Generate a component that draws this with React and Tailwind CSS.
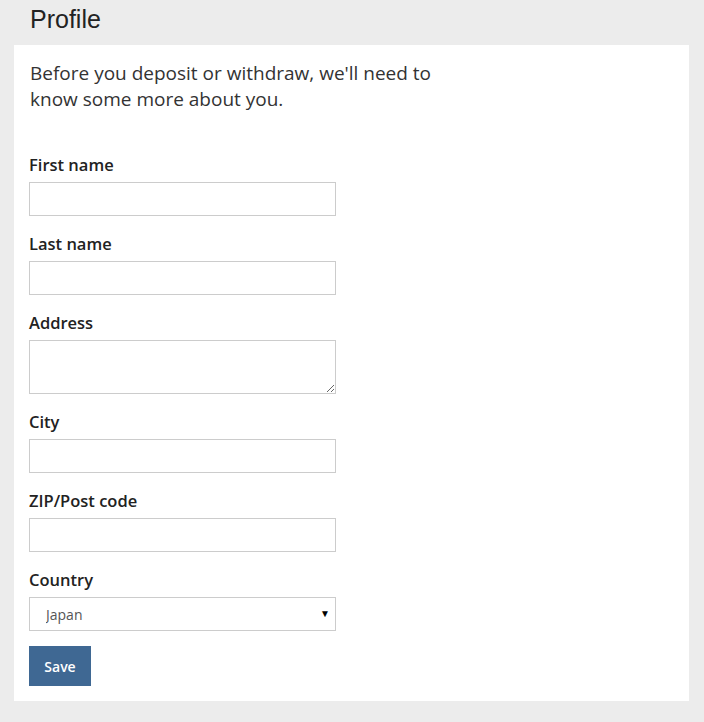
import React from 'react';

const fields = [
  { id: 'first', label: 'First name' },
  { id: 'last', label: 'Last name' },
  { id: 'address', label: 'Address', multiline: true },
  { id: 'city', label: 'City' },
  { id: 'zip', label: 'ZIP/Post code' },
];

const inputClass =
  'block w-[307px] border border-[#cccccc] bg-white outline-none';

const Field = ({ id, label, multiline }) => (
  <div className="mt-[17px] first:mt-0">
    <label htmlFor={id} className="block text-[16.5px] leading-[22px] font-semibold text-[#222] mb-[6px]">
      {label}
    </label>
    {multiline ? (
      <textarea id={id} className={`${inputClass} h-[54px] resize`} />
    ) : (
      <input id={id} type="text" className={`${inputClass} h-[34px]`} />
    )}
  </div>
);

export default function App() {
  return (
    <div className="min-h-screen bg-[#ececec] pb-[21px]" style={{ fontFamily: '"Open Sans", sans-serif' }}>
      <h1
        className="h-[45px] pl-[30px] pt-[5px] text-[25px] leading-[28px] text-[#222]"
        style={{ fontFamily: '"Liberation Sans", Arial, sans-serif' }}
      >
        Profile
      </h1>
      <div className="ml-[14px] mr-[15px] bg-white p-[15px]">
        <p className="pl-[1px] text-[19px] leading-[26px] text-[#333] w-[445px]">
          Before you deposit or withdraw, we'll need to know some more about you.
        </p>
        <form className="mt-[42px]" onSubmit={(e) => e.preventDefault()}>
          {fields.map((f) => (
            <Field key={f.id} {...f} />
          ))}
          <div className="mt-[17px]">
            <label htmlFor="country" className="block text-[16.5px] leading-[22px] font-semibold text-[#222] mb-[6px]">
              Country
            </label>
            <div className="relative w-[307px]">
              <select
                id="country"
                defaultValue="Japan"
                className={`${inputClass} h-[34px] appearance-none pl-[16px] text-[14px] text-[#555]`}
              >
                <option>Japan</option>
              </select>
              <span className="pointer-events-none absolute right-[6px] top-[9px] text-[10px] leading-[14px] text-black">
                ▼
              </span>
            </div>
          </div>
          <button
            type="submit"
            className="mt-[15px] h-[40px] w-[62px] bg-[#3f6893] text-[14px] font-semibold text-white"
          >
            Save
          </button>
        </form>
      </div>
    </div>
  );
}
